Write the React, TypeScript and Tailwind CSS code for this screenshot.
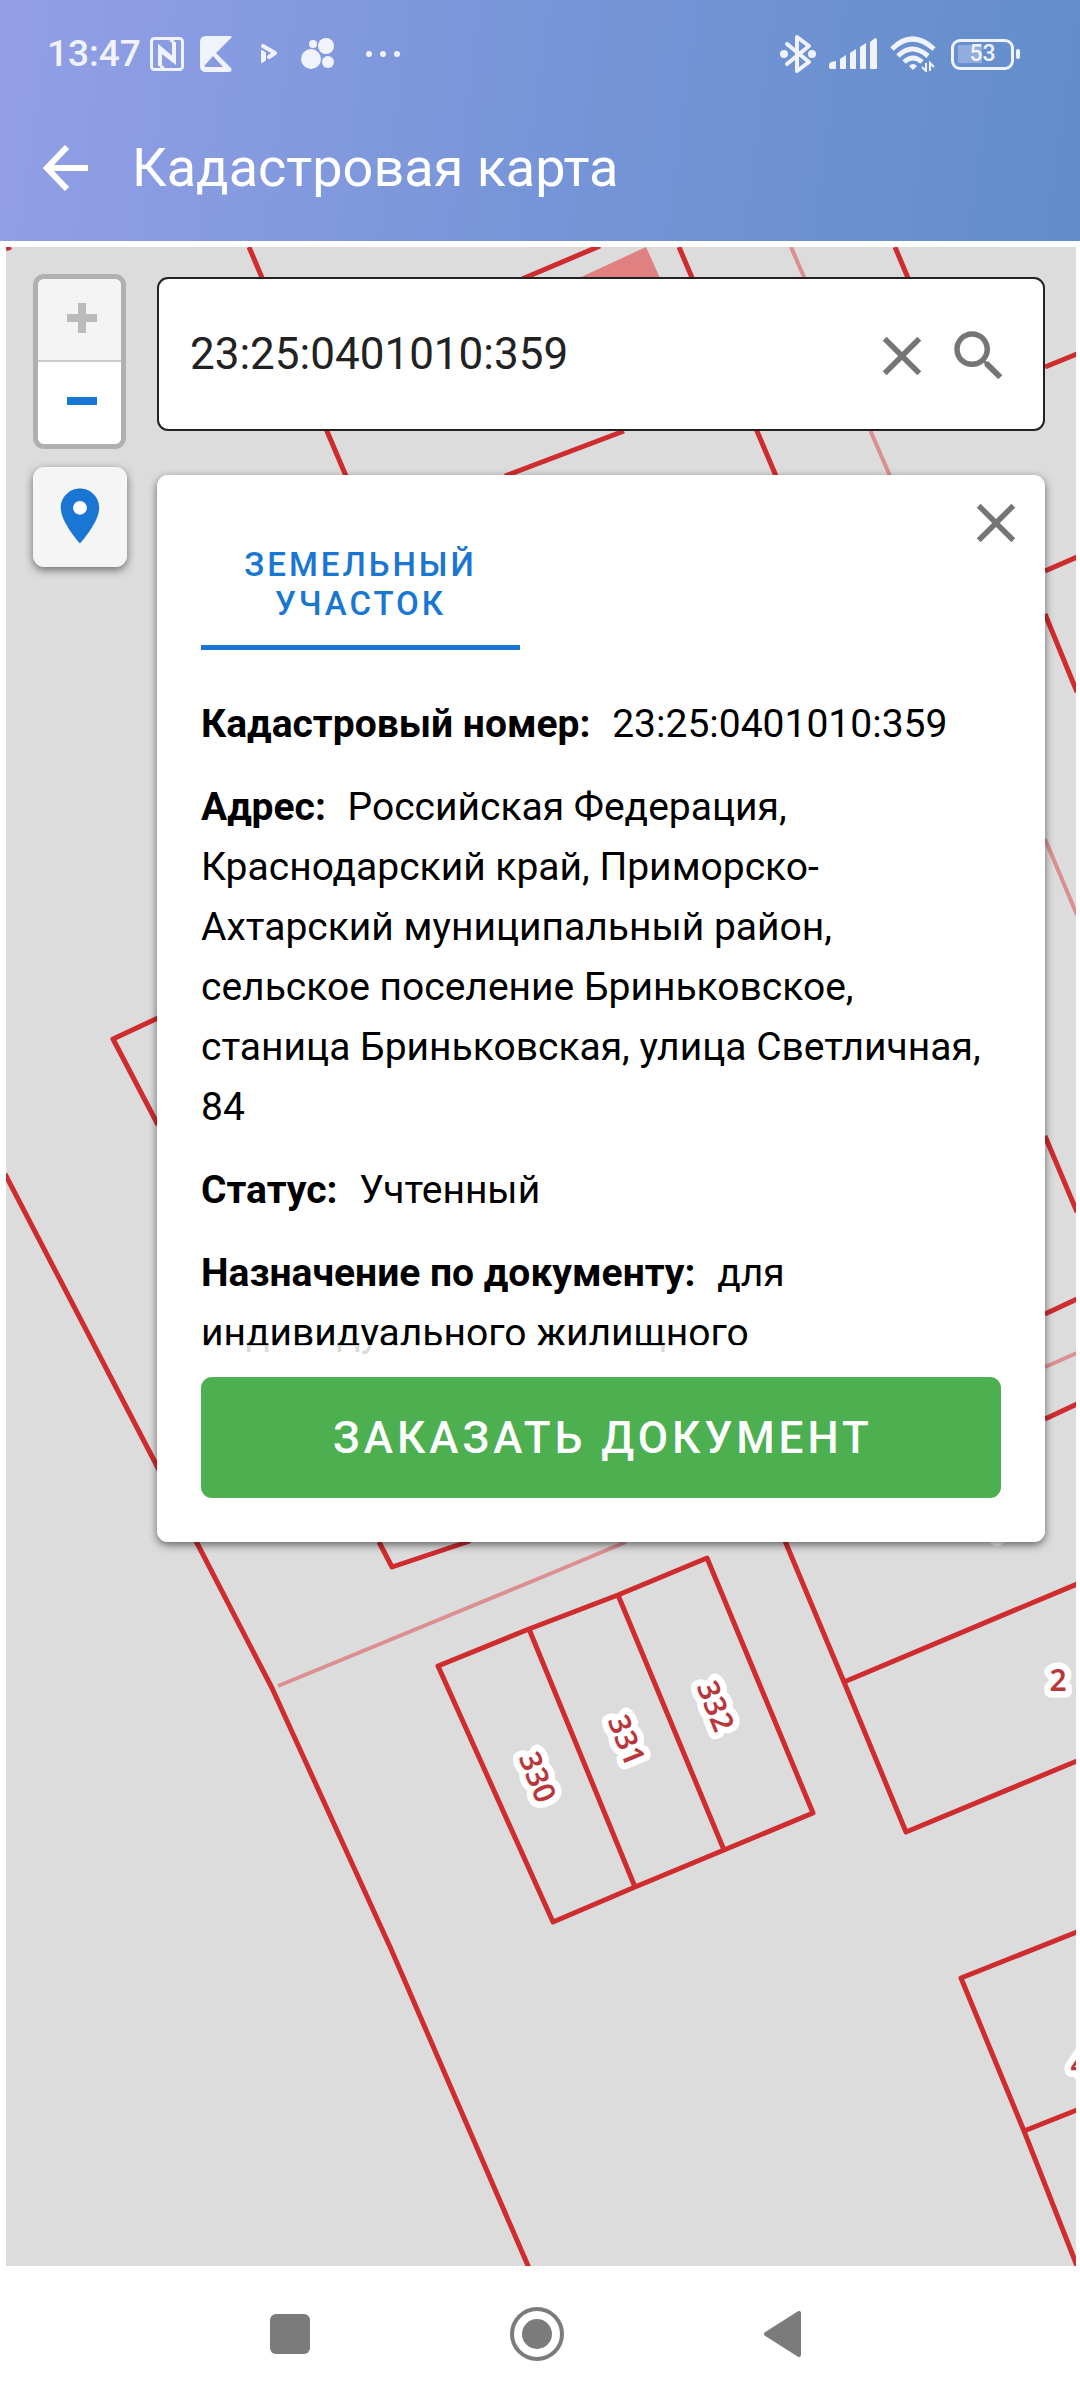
import { useState } from "react";

const details = [
  { label: "Кадастровый номер:", value: "23:25:0401010:359" },
  {
    label: "Адрес:",
    value:
      "Российская Федерация, Краснодарский край, Приморско-Ахтарский муниципальный район, сельское поселение Бриньковское, станица Бриньковская, улица Светличная, 84",
  },
  { label: "Статус:", value: "Учтенный" },
  { label: "Назначение по документу:", value: "для индивидуального жилищного" },
];

const borders = [
  "M6 249L11 247",
  "M249 247L346 476",
  "M522 279L600 246",
  "M679 247L776 476",
  "M895 247L908 278",
  "M505 476L624 431",
  "M1045 367L1077 354",
  "M1045 571L1077 557",
  "M1045 614L1077 692",
  "M1045 1136L1077 1212",
  "M1045 1314L1077 1299",
  "M1045 1419L1077 1404",
  "M158 1018L113 1039L158 1125",
  "M5 1174L158 1468L197 1543L272 1688L391 1949L529 2268",
  "M379 1542L392 1567L470 1541",
  "M438 1666L529 1629L618 1595L707 1558L813 1813L724 1850L635 1887L553 1922Z",
  "M529 1629L635 1887",
  "M618 1595L724 1850",
  "M785 1541L844 1682L906 1832L1077 1761",
  "M844 1682L1077 1584",
  "M1077 1932L961 1978L1024 2131L1077 2266",
  "M1024 2131L1077 2110",
];

const faintBorders = [
  "M791 247L890 476",
  "M1045 839L1077 915",
  "M1045 1367L1077 1353",
  "M278 1686L540 1578L626 1542",
];

const plots = [
  { name: "330", x: 538, y: 1777, angle: 68 },
  { name: "331", x: 627, y: 1740, angle: 68 },
  { name: "332", x: 716, y: 1706, angle: 68 },
  { name: "2", x: 1058, y: 1680, angle: 0 },
  { name: "4", x: 1079, y: 2064, angle: 0 },
];

function CadastralMap() {
  return (
    <svg
      className="absolute inset-0 h-full w-full"
      viewBox="6 247 1070 2019"
      preserveAspectRatio="xMidYMin slice"
      aria-hidden="true"
    >
      <path d="M579 278L646 247L660 278Z" fill="#e08080" />
      <path d={faintBorders.join("")} fill="none" stroke="#dc8f90" strokeWidth="4" />
      <path d={borders.join("")} fill="none" stroke="#cf2c2f" strokeWidth="5" strokeLinejoin="round" />
      <circle cx="997" cy="1537" r="9" fill="#fff" />
      {plots.map((plot) => (
        <text
          key={plot.name}
          x={plot.x}
          y={plot.y}
          dy="11"
          transform={`rotate(${plot.angle} ${plot.x} ${plot.y})`}
          textAnchor="middle"
          fontFamily="'Noto Sans', sans-serif"
          fontSize="30"
          fontWeight="600"
          fill="#b9373b"
          stroke="#fff"
          strokeWidth="13"
          strokeLinejoin="round"
          paintOrder="stroke"
        >
          {plot.name}
        </text>
      ))}
    </svg>
  );
}

function CloseIcon() {
  return (
    <svg className="size-[66px]" viewBox="0 0 24 24" fill="#757575" aria-hidden="true">
      <path d="M19 6.41L17.59 5 12 10.59 6.41 5 5 6.41 10.59 12 5 17.59 6.41 19 12 13.41 17.59 19 19 17.59 13.41 12z" />
    </svg>
  );
}

function StatusBar() {
  return (
    <div className="flex h-[108px] items-center justify-between pr-[60px] pl-[47px] text-[#f0f3fc]">
      <div className="flex items-center">
        <span className="w-[103px] text-[37px] leading-10 font-medium">13:47</span>
        <svg width="34" height="34" viewBox="0 0 34 34" fill="none" stroke="currentColor" aria-hidden="true">
          <rect x="1.5" y="1.5" width="31" height="31" rx="3" strokeWidth="3" />
          <path d="M10 29V11L23 22" strokeWidth="4" />
          <path d="M24 5V24L11 14" strokeWidth="4" />
          <path d="M10 29L14 31M24 5L20 3" strokeWidth="3" />
        </svg>
        <svg className="ml-4" width="32" height="36" viewBox="0 0 32 36" fill="currentColor" aria-hidden="true">
          <path
            fillRule="evenodd"
            d="M6 0H30Q33 0 31 2L16 17L31 32Q33 36 29 36H6Q0 36 0 30V6Q0 0 6 0ZM13 20L5 29Q4 31 6 31H23Z"
          />
        </svg>
        <svg className="ml-7" width="19" height="22" viewBox="0 0 19 22" fill="none" stroke="currentColor" strokeLinejoin="round" strokeLinecap="round" aria-hidden="true">
          <path d="M3 3L15 10L9 14" strokeWidth="4" />
          <path d="M2 8V19L5 17V10Z" strokeWidth="2" fill="currentColor" />
        </svg>
        <svg className="ml-[22px]" width="34" height="32" viewBox="0 0 34 32" fill="currentColor" aria-hidden="true">
          <circle cx="12" cy="6" r="4" />
          <circle cx="25" cy="8" r="8" />
          <circle cx="10" cy="21" r="10" />
          <circle cx="27" cy="24" r="6" />
        </svg>
        <svg className="ml-[30px]" width="36" height="8" viewBox="0 0 36 8" fill="currentColor" aria-hidden="true">
          <circle cx="4" cy="4" r="3" />
          <circle cx="18" cy="4" r="3" />
          <circle cx="32" cy="4" r="3" />
        </svg>
      </div>
      <div className="flex items-center">
        <svg width="36" height="40" viewBox="0 0 36 40" fill="none" stroke="currentColor" strokeWidth="4" strokeLinejoin="round" strokeLinecap="round" aria-hidden="true">
          <path d="M7 10L29 28L17 37V3L29 12L7 30" />
          <circle cx="4" cy="20" r="2" />
          <circle cx="32" cy="20" r="2" />
        </svg>
        <svg className="ml-[13px]" width="48" height="32" viewBox="0 0 48 32" fill="currentColor" aria-hidden="true">
          <path d="M0 27Q0 25 2 24L7 23V30Q7 31 6 31H2Q0 31 0 29Z" />
          <path d="M11 21L17 17V30Q17 31 16 31H12Q11 31 11 30Z" />
          <path d="M21 15L27 11V30Q27 31 26 31H22Q21 31 21 30Z" />
          <path d="M31 9L37 5V30Q37 31 36 31H32Q31 31 31 30Z" />
          <path d="M41 4L46 0Q48 0 48 2V30Q48 31 47 31H42Q41 31 41 30Z" />
        </svg>
        <svg className="ml-[13px]" width="46" height="36" viewBox="0 0 46 36" fill="none" stroke="currentColor" strokeWidth="5" aria-hidden="true">
          <path d="M2 13Q22 -7 44 13" />
          <path d="M8 20Q22 6 38 20" />
          <path d="M14 26Q23 18 32 26" />
          <path d="M19 30Q23 26 27 30L23 34Z" fill="currentColor" stroke="none" />
          <path d="M36 27V35L32 31M40 35V27L44 31" strokeWidth="2" />
        </svg>
        <div className="ml-[15px] flex items-center gap-0.5">
          <div className="flex h-[31px] w-[63px] items-center justify-center rounded-[9px] border-3 border-[#f0f3fc] bg-[linear-gradient(#92addd,#92addd)] bg-[length:24px_18px] bg-[position:4px_center] bg-no-repeat">
            <span className="text-[23px] leading-6 font-medium">53</span>
          </div>
          <div className="h-2.5 w-1 rounded-sm bg-current" />
        </div>
      </div>
    </div>
  );
}

function ZoomControl() {
  return (
    <div className="flex w-[93px] flex-col overflow-hidden rounded-[11px] border-5 border-[#b0b0b0]">
      <button
        type="button"
        aria-label="Приблизить"
        disabled
        className="flex h-[83px] items-center justify-center border-b-2 border-[#ccc] bg-[#f4f4f4] pb-1 pl-1 text-[#bbb]"
      >
        <svg width="30" height="30" viewBox="0 0 30 30" fill="currentColor" aria-hidden="true">
          <path d="M11 0h8v11h11v8H19v11h-8V19H0v-8h11z" />
        </svg>
      </button>
      <button
        type="button"
        aria-label="Отдалить"
        className="flex h-[82px] items-center justify-center bg-white pb-1 pl-1 text-[#1976d2]"
      >
        <svg width="30" height="30" viewBox="0 0 30 30" fill="currentColor" aria-hidden="true">
          <path d="M0 11h30v8H0z" />
        </svg>
      </button>
    </div>
  );
}

function ParcelCard() {
  return (
    <section className="flex flex-col rounded-[11px] bg-white shadow-[0_3px_8px_rgba(0,0,0,0.55)]">
      <div className="flex items-start justify-between pt-[15px] pr-4 pl-11">
        <button
          type="button"
          role="tab"
          aria-selected="true"
          className="mt-[29px] w-[319px] border-b-5 border-[#1976d2] px-10 pt-[26px] pb-[22px] text-center text-[33px] leading-[39px] font-medium tracking-[3px] text-[#1976d2] uppercase"
        >
          Земельный участок
        </button>
        <button type="button" aria-label="Закрыть">
          <CloseIcon />
        </button>
      </div>
      <div className="mt-11 flex flex-col gap-[23px] px-11 text-[39px] leading-[60px] text-black">
        {details.map((item) => (
          <p key={item.label}>
            <strong className="mr-3 font-bold">{item.label}</strong> {item.value}
          </p>
        ))}
      </div>
      <div className="relative -mt-[18px] rounded-b-[11px] bg-white/85 px-11 pt-8 pb-11">
        <button
          type="button"
          className="h-[121px] w-full rounded-[11px] bg-[#4caf50] pl-1 text-[44px] font-medium tracking-[4px] text-white uppercase"
        >
          Заказать документ
        </button>
      </div>
    </section>
  );
}

export default function App() {
  const [query, setQuery] = useState("23:25:0401010:359");

  return (
    <div className="flex min-h-screen flex-col bg-white font-['Roboto',sans-serif]">
      <header className="h-[241px] bg-[linear-gradient(98deg,#939fe6_0%,#7795d8_50%,#628dca_100%)]">
        <StatusBar />
        <div className="flex items-center gap-11 pl-[43px] text-white">
          <a href="#" aria-label="Назад">
            <svg width="45" height="46" viewBox="0 0 45 46" fill="none" stroke="currentColor" strokeWidth="6" aria-hidden="true">
              <path d="M24 2L4 23L24 44M4 23H45" />
            </svg>
          </a>
          <h1 className="text-[54px] leading-[120px]">Кадастровая карта</h1>
        </div>
      </header>

      <main className="relative mt-1.5 mr-1 ml-1.5 flex flex-1 items-start gap-[30px] overflow-hidden bg-[#dcdcdc] pr-[31px] pb-11 pl-[27px]">
        <CadastralMap />
        <div className="relative mt-[27px] flex flex-col gap-[18px]">
          <ZoomControl />
          <button
            type="button"
            aria-label="Моё местоположение"
            className="flex h-[100px] w-[94px] items-center justify-center rounded-[11px] bg-[#f5f5f5] pb-0.5 shadow-[0_3px_8px_rgba(0,0,0,0.5)]"
          >
            <svg className="size-[66px]" viewBox="0 0 24 24" aria-hidden="true">
              <circle cx="12" cy="9" r="3" fill="#fff" />
              <path
                fill="#1976d2"
                d="M12 2C8.13 2 5 5.13 5 9c0 5.25 7 13 7 13s7-7.75 7-13c0-3.87-3.13-7-7-7zm0 9.5c-1.38 0-2.5-1.12-2.5-2.5s1.12-2.5 2.5-2.5 2.5 1.12 2.5 2.5-1.12 2.5-2.5 2.5z"
              />
            </svg>
          </button>
        </div>
        <div className="relative mt-[30px] flex min-w-0 flex-1 flex-col gap-11">
          <form className="flex h-[154px] items-center gap-[11px] rounded-[11px] border-2 border-[#222] bg-white px-[31px]">
            <input
              type="text"
              aria-label="Кадастровый номер"
              value={query}
              onChange={(e) => setQuery(e.target.value)}
              className="min-w-0 flex-1 bg-transparent text-[44px] text-[#222] outline-none"
            />
            <div className="flex gap-[11px] pt-1">
              <button type="button" aria-label="Очистить" onClick={() => setQuery("")}>
                <CloseIcon />
              </button>
              <button type="submit" aria-label="Найти">
                <svg className="size-[66px]" viewBox="0 0 24 24" fill="#757575" aria-hidden="true">
                  <path d="M15.5 14h-.79l-.28-.27C15.41 12.59 16 11.11 16 9.5 16 5.91 13.09 3 9.5 3S3 5.91 3 9.5 5.91 16 9.5 16c1.61 0 3.09-.59 4.23-1.57l.27.28v.79l5 4.99L20.49 19l-4.99-5zm-6 0C7.01 14 5 11.99 5 9.5S7.01 5 9.5 5 14 7.01 14 9.5 11.99 14 9.5 14z" />
                </svg>
              </button>
            </div>
          </form>
          <ParcelCard />
        </div>
      </main>

      <nav className="flex h-[134px] items-center justify-center gap-[200px] pt-0.5 pr-2 text-[#7b7b7b]">
        <button type="button" aria-label="Недавние">
          <svg width="40" height="40" viewBox="0 0 40 40" fill="currentColor" aria-hidden="true">
            <rect width="40" height="40" rx="6" />
          </svg>
        </button>
        <button type="button" aria-label="Домой">
          <svg width="54" height="54" viewBox="0 0 54 54" aria-hidden="true">
            <circle cx="27" cy="27" r="25" fill="none" stroke="currentColor" strokeWidth="4" />
            <circle cx="27" cy="27" r="15" fill="currentColor" />
          </svg>
        </button>
        <button type="button" aria-label="Назад">
          <svg width="38" height="46" viewBox="0 0 38 46" fill="currentColor" stroke="currentColor" strokeWidth="4" strokeLinejoin="round" aria-hidden="true">
            <path d="M2 23L35 2V44Z" />
          </svg>
        </button>
      </nav>
    </div>
  );
}
